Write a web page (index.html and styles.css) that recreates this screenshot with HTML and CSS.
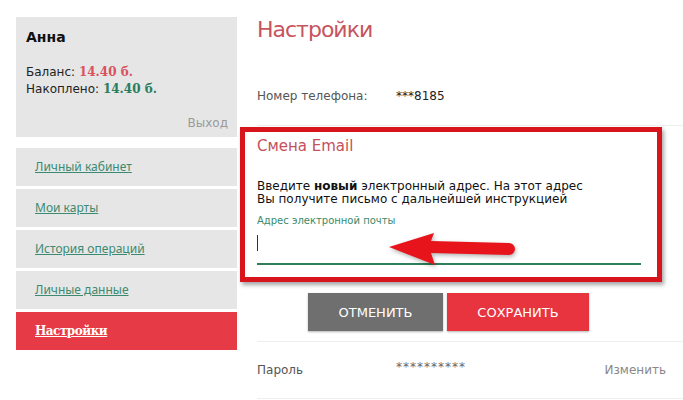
FILE: index.html
```html
<!DOCTYPE html>
<html lang="ru">
<head>
    <meta charset="UTF-8">
    <meta name="viewport" content="width=device-width, initial-scale=1.0">
    <title>Настройки</title>
    <link rel="stylesheet" href="styles.css">
</head>
<body>
    <div class="page">
        <aside class="sidebar">
            <div class="profile">
                <div class="profile-name">Анна</div>
                <div class="profile-line">Баланс: <b class="sum sum-red">14.40 б.</b></div>
                <div class="profile-line">Накоплено: <b class="sum sum-green">14.40 б.</b></div>
                <div class="logout">Выход</div>
            </div>
            <nav class="menu">
                <a href="#" class="menu-item">Личный кабинет</a>
                <a href="#" class="menu-item">Мои карты</a>
                <a href="#" class="menu-item">История операций</a>
                <a href="#" class="menu-item">Личные данные</a>
                <a href="#" class="menu-item active">Настройки</a>
            </nav>
        </aside>

        <main class="content">
            <h1 class="title">Настройки</h1>

            <div class="row row-phone">
                <span class="row-label">Номер телефона:</span>
                <span class="row-value">***8185</span>
            </div>

            <section class="email-box">
                <h2 class="email-title">Смена Email</h2>
                <p class="email-text">Введите <b>новый</b> электронный адрес. На этот адрес<br>Вы получите письмо с дальнейшей инструкцией</p>
                <label class="email-label" for="email">Адрес электронной почты</label>
                <div class="email-field">
                    <span class="caret"></span>
                    <input type="text" id="email">
                </div>
                <svg class="arrow" width="128" height="34" viewBox="0 0 128 34">
                    <path d="M1 15 L46 1 L43 9 L121 11 A6 6 0 0 1 121 23 L43 21 L47 33 Z" fill="#e8141c"/>
                </svg>
            </section>

            <div class="actions">
                <button class="btn btn-cancel">Отменить</button>
                <button class="btn btn-save">Сохранить</button>
            </div>

            <div class="row row-password">
                <span class="row-label">Пароль</span>
                <span class="row-value stars">**********</span>
                <a href="#" class="row-link">Изменить</a>
            </div>
        </main>
    </div>
</body>
</html>
```

FILE: styles.css
```css
body {
    margin: 0;
    padding: 0;
    background-color: #FFFFFF;
    font-family: 'DejaVu Sans', sans-serif;
    color: #222222;
    overflow: hidden;
}
.page {
    display: flex;
    align-items: flex-start;
    padding: 17px 0 0 16px;
}
.sidebar {
    width: 221px;
    flex-shrink: 0;
}
.profile {
    height: 120px;
    box-sizing: border-box;
    padding: 12px 9px 0 10px;
    background-color: #E6E6E6;
    font-size: 12px;
}
.profile-name {
    font-size: 14px;
    font-weight: bold;
    color: #111111;
    margin-bottom: 19px;
}
.profile-line {
    line-height: 17px;
}
.sum {
    font-family: 'DejaVu Serif', serif;
    font-size: 12px;
}
.sum-red {
    color: #D9525E;
}
.sum-green {
    color: #2A7D5E;
}
.logout {
    text-align: right;
    color: #9A9A9A;
    margin-top: 18px;
}
.menu {
    margin-top: 11px;
    display: flex;
    flex-direction: column;
    gap: 3px;
}
.menu-item {
    display: block;
    height: 38px;
    line-height: 38px;
    padding-left: 19px;
    background-color: #E6E6E6;
    color: #3C8A70;
    font-family: 'Noto Sans', sans-serif;
    font-size: 12px;
    text-decoration: underline;
}
.menu-item.active {
    background-color: #E63A46;
    color: #FFFFFF;
    font-family: 'DejaVu Serif', serif;
    font-weight: bold;
    letter-spacing: -0.5px;
}
.content {
    flex: 1;
    margin-left: 20px;
}
.title {
    margin: 0;
    font-size: 22px;
    font-weight: normal;
    line-height: 26px;
    letter-spacing: -1px;
    color: #C7545E;
}
.row {
    display: flex;
    align-items: center;
    font-size: 12px;
    color: #555555;
}
.row-label {
    width: 139px;
}
.row-value {
    color: #222222;
}
.row-phone {
    height: 68px;
    padding-top: 8px;
    box-sizing: border-box;
    border-bottom: 1px solid #EEEEEE;
    margin-top: 15px;
}
.email-box {
    position: relative;
    margin: 1px 21px 0 -17px;
    height: 155px;
    box-sizing: border-box;
    border: 5px solid #D8141D;
    padding: 5px 16px 0 12px;
    box-shadow: 2px 3px 4px rgba(0, 0, 0, 0.35);
}
.email-title {
    margin: 0;
    font-size: 15px;
    font-weight: normal;
    color: #C4505A;
}
.email-text {
    margin: 25px 0 0;
    font-size: 12px;
    line-height: 13px;
    color: #111111;
}
.email-label {
    display: block;
    margin-top: 9px;
    font-size: 10px;
    color: #3A8A6A;
}
.email-field {
    position: relative;
    height: 33px;
    margin-top: 4px;
    border-bottom: 2px solid #2E7D5B;
}
.email-field input {
    width: 100%;
    height: 100%;
    border: none;
    outline: none;
    padding: 0;
    background: transparent;
}
.caret {
    position: absolute;
    left: 0;
    top: 5px;
    width: 1px;
    height: 16px;
    background-color: #333333;
}
.arrow {
    position: absolute;
    left: 143px;
    top: 100px;
    filter: drop-shadow(1px 2px 2px rgba(0, 0, 0, 0.3));
}
.actions {
    display: flex;
    gap: 4px;
    margin: 11px 0 0 51px;
}
.btn {
    height: 38px;
    border: none;
    color: #FFFFFF;
    font-family: 'DejaVu Sans', sans-serif;
    font-size: 13px;
    text-transform: uppercase;
    cursor: pointer;
    box-shadow: 0 1px 2px rgba(0, 0, 0, 0.3);
}
.btn-cancel {
    width: 135px;
    background-color: #6F6F6F;
}
.btn-save {
    width: 142px;
    background-color: #E8343F;
}
.row-password {
    margin-top: 10px;
    height: 56px;
    border-top: 1px solid #EEEEEE;
    border-bottom: 1px solid #EEEEEE;
}
.stars {
    color: #666666;
    align-self: flex-start;
    margin-top: 18px;
    letter-spacing: 1px;
}
.row-link {
    margin-left: auto;
    margin-right: 17px;
    color: #888888;
    text-decoration: none;
}
```
